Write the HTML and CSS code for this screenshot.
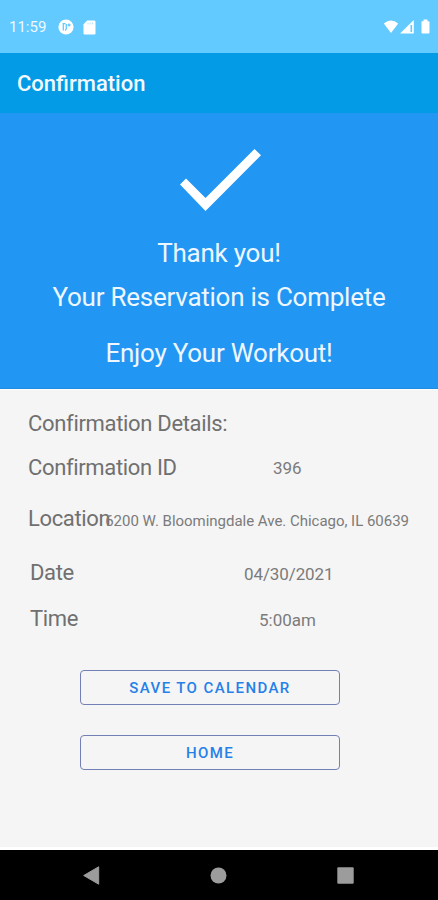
FILE: index.html
```html
<!DOCTYPE html>
<html lang="en">
<head>
<meta charset="utf-8">
<title>Confirmation</title>
<link rel="stylesheet" href="styles.css">
</head>
<body>
<div class="status-bar">
  <span class="clock">11:59</span>
  <svg class="app-icon" width="16" height="16" viewBox="0 0 16 16"><circle cx="8" cy="8" r="7.6" fill="#fff"/><path d="M5.300 4v7.500M4.600 4.600H7.500M8.300 5v4.500q0 1.500-1.300 2M9.500 6h3M11 4.500v3" fill="none" stroke="#62caff" stroke-width="1.300"/></svg>
  <svg class="card-icon" width="13" height="15" viewBox="0 0 13 15"><path d="M4.200.5h7q1.300 0 1.300 1.300v11.400q0 1.300-1.300 1.300H1.800Q.5 14.500.5 13.200V4.300z" fill="#fff"/><path d="M5 2.400v2M7.200 2.400v2M9.400 2.400v2" stroke="#a9e1ff" stroke-width=".8"/></svg>
  <svg class="signals" width="48" height="16" viewBox="0 0 48 16"><path d="M.8 4.500Q8 -1.500 15.200 4.500L8 14z" fill="#fff"/><path d="M30.800 1v13.500H17z" fill="#fff"/><path d="M27.500 6h1.600v7h-1.600z" fill="#62caff"/><path d="M38.500 2.200h2V.5h4v1.700h1.300q.7 0 .7.700v10.600q0 1-1 1h-6q-1 0-1-1V2.900q0-.7 0-.7z" fill="#fff"/></svg>
</div>
<header class="app-bar">Confirmation</header>
<section class="hero">
  <svg class="check" width="82" height="62" viewBox="0 0 82 62"><path d="M0 35.500 6 29.500 25.500 49 74.500 0 81 6.300 25.500 62z" fill="#fff"/></svg>
  <p class="thanks">Thank you!</p>
  <p class="complete">Your Reservation is Complete</p>
  <p class="enjoy">Enjoy Your Workout!</p>
</section>
<main class="details">
  <h2 class="heading">Confirmation Details:</h2>
  <dl class="rows">
    <div class="row id"><dt>Confirmation ID</dt><dd>396</dd></div>
    <div class="row location"><dt>Location</dt><dd>6200 W. Bloomingdale Ave. Chicago, IL 60639</dd></div>
    <div class="row date"><dt>Date</dt><dd>04/30/2021</dd></div>
    <div class="row time"><dt>Time</dt><dd>5:00am</dd></div>
  </dl>
  <div class="actions">
    <button>SAVE TO CALENDAR</button>
    <button>HOME</button>
  </div>
</main>
<nav class="nav-bar">
  <svg width="17" height="19" viewBox="0 0 17 19"><path d="M.7 9.500 15.700.8v17.400z" fill="#9c9c9c" stroke="#9c9c9c" stroke-linejoin="round"/></svg>
  <svg width="17" height="17" viewBox="0 0 17 17"><circle cx="8.500" cy="8.500" r="8" fill="#9c9c9c"/></svg>
  <svg width="17" height="17" viewBox="0 0 17 17"><rect x=".3" y=".3" width="16.400" height="16.400" rx="1" fill="#9c9c9c"/></svg>
</nav>
</body>
</html>
```
FILE: styles.css
```css
* { box-sizing: border-box; }
body, p, h2, dl, dd { margin: 0; }
body {
  width: 438px;
  height: 900px;
  overflow: hidden;
  display: flex;
  flex-direction: column;
  font-family: Roboto, sans-serif;
  background: #f5f5f5;
}
svg { display: block; flex: none; }

.status-bar {
  flex: none;
  height: 53px;
  padding: 1px 7px 0 9px;
  display: flex;
  align-items: center;
  background: #62caff;
  color: #fff;
}
.clock { width: 49px; font-size: 15px; opacity: .9; }
.card-icon { margin-left: 9px; }
.signals { margin-left: auto; }

.app-bar {
  flex: none;
  height: 60px;
  padding-left: 17px;
  line-height: 61px;
  font-size: 22px;
  font-weight: 500;
  color: #f2faff;
  background: #039be5;
}

.hero {
  flex: none;
  height: 276px;
  padding-top: 36px;
  display: flex;
  flex-direction: column;
  align-items: center;
  background: #2196f3;
  color: #eef7ff;
  font-size: 26px;
  letter-spacing: -.25px;
  line-height: 36px;
  border-bottom: 1px solid #218be0;
}
.check { margin-left: 3px; }
.thanks { margin-top: 24px; }
.complete { margin-top: 8px; }
.enjoy { margin-top: 20px; }

.details {
  flex: 1;
  padding-left: 28px;
  border-top: 1px solid #fff;
  border-bottom: 3px solid #fff;
  color: #707070;
}
.heading {
  margin-top: 19px;
  font-size: 22px;
  font-weight: 400;
  line-height: 30px;
  letter-spacing: -.32px;
}
.row {
  display: grid;
  grid-template-columns: 1fr;
  align-items: baseline;
  height: 30px;
  line-height: 30px;
  width: 381px;
}
.row dt, .row dd { grid-area: 1 / 1; }
.row dt { font-size: 22px; letter-spacing: -.35px; }
.row dd { font-size: 17px; color: #7b7b7b; position: relative; top: -1px; }
.id { margin-top: 14px; }
.id dd { margin-left: 245px; }
.location { margin-top: 21px; }
.location dd { top: 0; font-size: 15px; text-align: right; white-space: nowrap; letter-spacing: -.02px; }
.date { margin-top: 24px; padding-left: 2px; }
.date dd { margin-left: 214px; top: 0; letter-spacing: -.1px; }
.time { margin-top: 16px; padding-left: 2px; }
.time dd { margin-left: 229px; top: 0; }

.actions {
  margin: 36px 0 0 52px;
  display: flex;
  flex-direction: column;
  gap: 30px;
}
button {
  width: 260px;
  height: 35px;
  padding: 0;
  font: 500 15px Roboto, sans-serif;
  letter-spacing: 1.400px;
  color: #2581e8;
  background: none;
  border: 1.500px solid #7380b5;
  border-radius: 4px;
}

.nav-bar {
  flex: none;
  height: 50px;
  padding: 0 84px 0 83px;
  display: flex;
  align-items: center;
  justify-content: space-between;
  background: #000;
}
```
